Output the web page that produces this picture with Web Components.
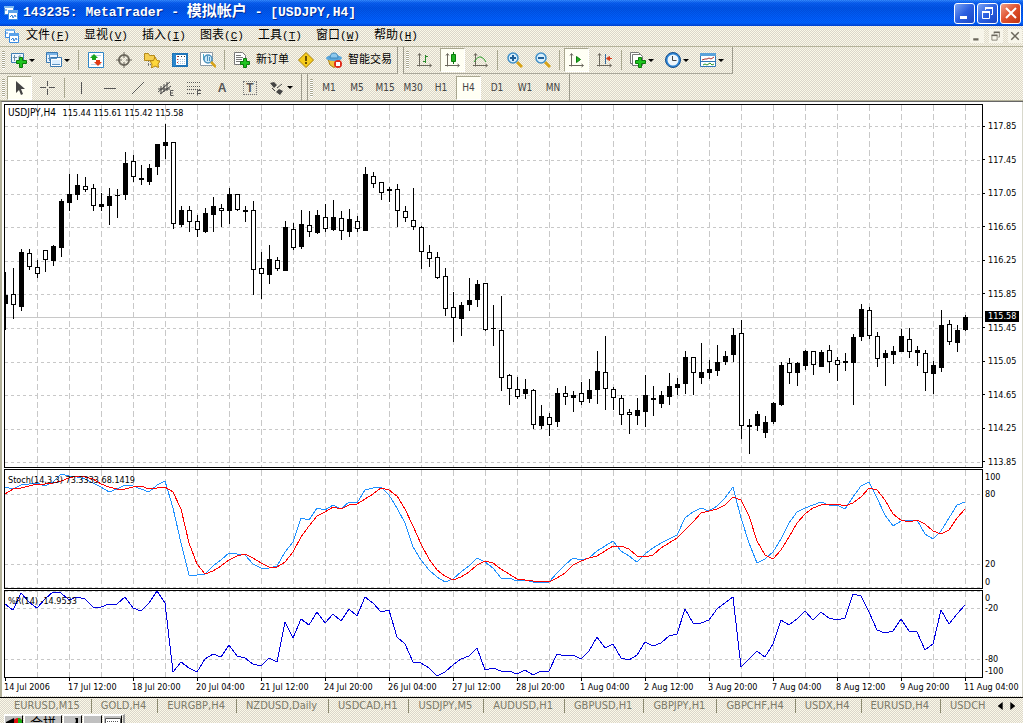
<!DOCTYPE html>
<html lang="zh-CN">
<head>
<meta charset="utf-8">
<title>143235: MetaTrader - 模拟帐户 - [USDJPY,H4]</title>
<style>
  :root {
    --face: repeating-conic-gradient(#dbd6cb 0 25%, #fbf9e8 0 50%) 0 0 / 2px 2px;
    --ui: "DejaVu Sans Condensed", "Liberation Sans", "Noto Sans CJK SC", sans-serif;
    --song: "Liberation Mono", "Noto Sans CJK SC", monospace;
  }
  body { margin: 0; min-height: 100vh; overflow: hidden; }
</style>
</head>
<body>
<mt-window></mt-window>

<script>
const ICONS = {
  app: `<path fill="#fff" stroke="#3a8be0" d="M1.5 1.5h9v8h-9z"/><path fill="#7db8f0" d="M1 1h10v2H1z"/><path fill="#fff" stroke="#3a8be0" d="M5.500 5.500h9v9h-9z"/><path fill="#5aa2ea" d="M5 5h10v3H5z"/><path fill="none" stroke="#2f7fd8" d="M3 6v-2M7 12l2-2 1 3 2-3 1 2"/>`,
  newchart: `<path fill="#eef6ff" stroke="#3f7fb5" d="M.5 1.5h12v9H.5z"/><path fill="none" stroke="#6c8fa8" d="M3.500 3v6M2 5.500h4M8 8V4h2"/><path fill="#1fc41f" stroke="#0a7a0a" d="M8.500 5.500h3v3h4v3h-4v4h-3v-4h-3v-3h3z"/>`,
  profiles: `<path fill="#eaf4ff" stroke="#3a78b0" d="M.5.5h11v10H.5z"/><path fill="#79b3e6" d="M1 1h10v2H1z"/><path fill="#fff" stroke="#3a78b0" d="M4.500 5.500h11v9h-11z"/><path fill="#dbeeff" d="M6 8h8v5H6z"/><path stroke="#5b93c4" d="M2 6.500h9M3.500 3v6M6 12.500h8"/>`,
  market: `<path fill="#fff" stroke="#2f86c8" d="M.5.5h15v15H.5z"/><path stroke="#b9d4ea" d="M3 3.500h10M3 12.500h10"/><path fill="#18a51c" d="M6 2l4 4-2 0v2H4V6H2z"/><path fill="#e03a16" d="M10 14l-4-4h2V8h4v2h2z"/>`,
  cross: `<circle cx="8" cy="8" r="5" fill="none" stroke="#6b675c" stroke-width="2"/><path stroke="#6b675c" d="M8 0v6M8 10v6M0 8h6M10 8h6"/>`,
  navigator: `<path fill="#f6cf50" stroke="#b58a1a" d="M.5 8.500v-7h4l1 2h5v5z"/><path fill="none" stroke="#777" stroke-dasharray="1 1" d="M4.500 9v6M4 12.500h3"/><path fill="#ffd83c" stroke="#b58410" d="M11 5l2 3.500 3 .5-2 3 .500 3.500-3.500-1.500L7.500 16l.5-4-2-3 3.500-.5z"/>`,
  terminal: `<path fill="#fff" stroke="#1f74b8" stroke-width="2" d="M1 2h14v12H1z"/><path fill="#2a86cc" d="M1 2h3v12H1z"/><path stroke="#333" stroke-dasharray="1 2" d="M6 4.500h8"/><path stroke="#a7c6e0" stroke-dasharray="1 1" d="M6 7.500h8M6 9.500h8M6 11.500h8"/><path stroke="#c33" stroke-dasharray="1 2" d="M5.500 4v9"/>`,
  tester: `<path fill="#fff" stroke="#8c9aa5" d="M.5.5h12v13H.5z"/><path stroke="#4aa9c9" d="M3.500 2v6M6.500 3v6"/><circle cx="8" cy="7" r="4" fill="#cdeafb" stroke="#4b91bd" stroke-width="1.500"/><path stroke="#4b91bd" d="M7.500 4v5M9.500 5v4"/><path stroke="#d8a318" stroke-width="2.500" d="M11 10l5 5"/>`,
  order: `<path fill="#fff" stroke="#777" d="M.5.500h8l3 3v9H.5z"/><path stroke="#777" d="M2 3.500h5M2 5.500h7M2 7.500h6M2 9.500h5"/><path fill="#1fc41f" stroke="#0a7a0a" d="M9.500 6.500h3v3h3v3h-3v3h-3v-3h-3v-3h3z"/>`,
  warn: `<path fill="#f6cc1c" stroke="#a77d00" d="M8 .5L15.500 8 8 15.500.5 8z"/><path stroke="#6a5000" stroke-width="2" d="M8 4v5M8 10v2"/>`,
  expert: `<path fill="#f1c13a" stroke="#b0851a" d="M2 7h12l-2 6-4 2.500L4 13z"/><ellipse cx="8" cy="6" rx="8" ry="3" fill="#5aa7dd"/><path fill="#8cc8ee" stroke="#3f87b9" d="M4 6q0-5 4-5t4 5z"/><circle cx="12" cy="12" r="4" fill="#e02a1a"/><path fill="#fff" d="M10 10h4v4h-4z"/>`,
  bars: `<path fill="none" stroke="#6b675c" d="M2.500 2v12.500M0 13.500h14M1 3.500l1.500-2 1.500 2M12.500 12l2 1.500-2 1.500"/><path stroke="#2a8a2a" d="M8.500 3v8M6 9.500h2M9 4.500h2"/>`,
  candles: `<path fill="none" stroke="#6b675c" d="M2.500 2v12.500M0 13.500h14M1 3.500l1.500-2 1.500 2M12.500 12l2 1.500-2 1.500"/><path stroke="#0a7a0a" d="M8.500 0v12"/><path fill="#1fb41f" stroke="#0a7a0a" d="M6.500 2.500h4v7h-4z"/>`,
  line: `<path fill="none" stroke="#6b675c" d="M2.500 2v12.500M0 13.500h14M1 3.500l1.500-2 1.500 2M12.500 12l2 1.500-2 1.500"/><path fill="none" stroke="#2a9a2a" d="M1 10q4-6 7-5t5 5"/>`,
  zoomin: `<path stroke="#d8a318" stroke-width="3" d="M10 10l5 5"/><circle cx="6" cy="6" r="5" fill="#d8effc" stroke="#3f8fc8" stroke-width="1.500"/><path stroke="#1f5f98" stroke-width="2" d="M3 6h6M6 3v6"/>`,
  zoomout: `<path stroke="#d8a318" stroke-width="3" d="M10 10l5 5"/><circle cx="6" cy="6" r="5" fill="#d8effc" stroke="#3f8fc8" stroke-width="1.500"/><path stroke="#1f5f98" stroke-width="2" d="M3 6h6"/>`,
  scroll: `<path fill="none" stroke="#6b675c" d="M2.500 2v12.500M0 13.500h14M1 3.500l1.500-2 1.500 2M12.500 12l2 1.500-2 1.500"/><path fill="#1fb41f" stroke="#0a7a0a" d="M7.500 4.500v6l4-3z"/>`,
  shift: `<path fill="none" stroke="#6b675c" d="M2.500 2v12.500M0 13.500h14M1 3.500l1.500-2 1.500 2M12.500 12l2 1.500-2 1.500"/><path stroke="#356d9e" d="M8.500 2v10"/><path fill="#d43a1a" stroke="#d43a1a" d="M9.500 6.500l3-2v4zM12 6.500h3"/>`,
  indicators: `<path fill="#fff" stroke="#777" d="M.5.5h8l2 2v9H.5z"/><path fill="#fff" stroke="#777" d="M2.500 2.500h8l2 2v9h-10z"/><path fill="#1fc41f" stroke="#0a7a0a" d="M8.500 5.500h3v3h4v3h-4v4h-3v-4h-3v-3h3z"/>`,
  clock: `<circle cx="8" cy="8" r="6.500" fill="#eef6fc" stroke="#2f86d6" stroke-width="2"/><circle cx="8" cy="8" r="7.500" fill="none" stroke="#174f8c"/><path fill="none" stroke="#444" d="M7.500 4v4.500h4"/>`,
  template: `<path fill="#fff" stroke="#2f78b8" d="M.5 1.500h15v13H.5z"/><path fill="#5aa2da" d="M0 1h16v3H0z"/><path stroke="#2f78b8" d="M1 9.500h14"/><path fill="none" stroke="#a33" d="M2 8l3-1 2 0 2-1 2 1 3-2"/><path fill="none" stroke="#2a9a2a" d="M3 13l2-1 2 1 3-2 2 2 2-1"/>`,
  cursor: `<path fill="#444" d="M4 1v12l3-3 2 5 2-1-2-5h4z"/>`,
  plus: `<path stroke="#555" d="M7.500 1v5M7.500 9v6M0 7.500h6M9 7.500h6"/>`,
  vline: `<path stroke="#555" d="M7.500 2v12"/>`,
  hline: `<path stroke="#555" d="M2 8.500h12"/>`,
  trend: `<path stroke="#555" d="M2 14L14 2"/>`,
  channel: `<path stroke="#444" d="M0 12L12 2M2 14L13 6M3 6v8M6 4v8M9 2v9M0 9h12"/><path fill="none" stroke="#555" d="M15.500 10.500h-3v5h3M12.500 13h2.500"/>`,
  fibo: `<path stroke="#555" stroke-dasharray="1 1" d="M1 2.500h13M1 6.500h13M1 9.500h13M1 13.500h8"/><path fill="none" stroke="#555" d="M15 10.500h-3.500v5M12 13.500h3"/>`,
  arrows: `<path fill="#444" d="M1 3l4-1 3 3-3 3zM7 12l3-3 4 2-3 4z"/><path stroke="#444" d="M8 8l5-4M3 8l3 3"/>`,
  minimize: `<path fill="currentColor" d="M3 11h7v3H3z"/>`,
  restore: `<path fill="none" stroke="currentColor" stroke-width="1" d="M2.500 7.500h7v6h-7zM5.500 5V3.500h7v6H11"/><path fill="currentColor" d="M2 6h8v2H2zM5 2h8v2H5z"/>`,
  close: `<path fill="none" stroke="currentColor" stroke-width="2" d="M3 3l10 10M13 3L3 13"/>`
};
const icon = (n, s = 16) => `<svg width="${s}" height="${s}" viewBox="0 0 16 16" aria-hidden="true">${ICONS[n]}</svg>`;
const RESET = `*{box-sizing:border-box}button{font:inherit;color:inherit;background:none;border:0;margin:0;padding:0}svg{display:block;flex:none}`;

class MtElement extends HTMLElement {
  connectedCallback() {
    if (this.shadowRoot) return;
    this.attachShadow({ mode: "open" }).innerHTML = `<style>${RESET}${this.css()}</style>${this.html()}`;
  }
}

customElements.define("mt-titlebar", class extends MtElement {
  css() { return `
    :host{display:flex;align-items:center;height:26px;padding:0 2px 0 3px;gap:4px;color:#fff;
      background:repeating-conic-gradient(#0033cc55 0 25%,#0066ff22 0 50%) 0 0/2px 2px,linear-gradient(#3d95ff 0,#0a62ee 3px,#0055e0 8px,#0060f8 18px,#0066ff 23px,#0040c8 26px)}
    h1{flex:1;margin:0;font:bold 13px/20px var(--song);white-space:nowrap;text-shadow:1px 1px #002a90}
    span{font-size:15px;line-height:20px}
    div{display:flex;gap:2px}
    button{width:21px;height:21px;border:1px solid #fff;border-radius:3px;display:grid;place-items:center;background:linear-gradient(135deg,#7ba4f4,#2b5fe0 50%,#1c46c4)}
    button.x{background:linear-gradient(135deg,#f0a088,#e0502c 50%,#c03410)}`; }
  html() { return `${icon("app")}<h1>143235: MetaTrader - <span>模拟帐户</span> - [USDJPY,H4]</h1>
    <div><button aria-label="最小化">${icon("minimize")}</button><button aria-label="还原">${icon("restore")}</button><button class="x" aria-label="关闭">${icon("close")}</button></div>`; }
});

customElements.define("mt-menubar", class extends MtElement {
  css() { return `
    :host{display:flex;align-items:center;height:21px;padding:0 1px 0 4px;border-bottom:1px solid #b4b29a;font:11px/18px var(--song)}
    nav{flex:1;display:flex;margin-left:6px}
    nav button{width:58px;text-align:left;white-space:nowrap}
    span{font-size:12px}
    .w{display:flex;gap:5px;color:#6b675c}
    .w button{width:14px;height:14px;display:grid;place-items:center;background:#f7f5ea}`; }
  html() { return `${icon("app")}<nav>${[["文件","F"],["显视","V"],["插入","I"],["图表","C"],["工具","T"],["窗口","W"],["帮助","H"]]
    .map(([t, k]) => `<button><span>${t}</span>(<u>${k}</u>)</button>`).join("")}</nav>
    <div class="w"><button aria-label="最小化图表">${icon("minimize", 12)}</button><button aria-label="还原图表">${icon("restore", 12)}</button><button aria-label="关闭图表">${icon("close", 12)}</button></div>`; }
});

customElements.define("mt-toolbar", class extends MtElement {
  css() { return `
    :host{display:flex;align-items:center;height:27px;padding-right:2px;border-right:1px solid #9c9a8c;border-bottom:1px solid #a9a79a}
    :host::before{content:"";width:3px;height:18px;margin:0 1px 0 2px;background:repeating-linear-gradient(#a9a790 0 1px,#fff 1px 2px)}
    :host([second]){border-left:1px solid #9c9a8c;margin-left:5px}
    :host([second])::before{margin:0 2px}
    :host([flat]){border-bottom:0}`; }
  html() { return `<slot></slot>`; }
});

customElements.define("mt-tool", class extends MtElement {
  css() { return `
    :host{display:block}
    button{display:flex;align-items:center;justify-content:center;width:28px;height:24px;font:10px/14px var(--ui);color:#444}
    :host([drop]) button{width:35px;justify-content:flex-start;padding-left:5px;gap:2px}
    :host([drop]) button::after{content:"";border:3px solid transparent;border-top-color:#000;border-bottom:0}
    :host([label]) button{width:auto;padding:0 3px 0 6px;gap:6px;font:11px/14px var(--song);color:#000;white-space:nowrap}
    button[aria-pressed=true]{width:25px;margin:0 2px 0 1px;background:#fffff4;border:1px solid #a9a790;border-right-color:#fff;border-bottom-color:#fff}
    b{font:bold 12px/14px "Liberation Sans",sans-serif;color:#555}
    b.box{outline:1px dotted #777;padding:0 2px;line-height:12px}`; }
  html() {
    const a = n => this.getAttribute(n);
    const g = a("icon"), l = a("label"), t = a("text"), h = a("glyph");
    return `<button ${this.hasAttribute("on") ? 'aria-pressed="true"' : ""} ${l || t || h ? "" : `aria-label="${g}"`}>${g ? icon(g) : ""}${h ? `<b class="${a("frame") ?? ""}">${h}</b>` : ""}${l || t || ""}</button>`;
  }
});

customElements.define("mt-sep", class extends MtElement {
  css() { return `:host{display:block;width:1px;height:20px;margin:0 3px 0 2px;background:#a9a790}`; }
  html() { return ""; }
});

/* One row per bar: wick top, wick bottom, body top, body bottom, 1 = rising (solid) / 0 = falling (hollow) */
const BARS = [
[272,330,295,304,1],[268,319,294,305,0],[249,311,252,307,1],[249,270,253,267,0],[260,278,267,274,0],[250,272,250,260,0],[245,266,246,261,1],[199,257,201,248,1],[174,211,194,203,1],[174,200,185,195,1],
[177,192,186,190,0],[184,211,188,206,0],[193,211,204,207,1],[188,225,196,206,1],[189,218,195,196,1],[152,200,163,195,1],[155,182,161,177,0],[165,185,178,180,1],[164,185,168,182,1],[144,175,144,167,1],
[124,159,142,146,1],[142,229,142,224,0],[206,227,210,225,1],[206,232,210,222,0],[215,237,221,230,0],[208,233,213,232,1],[197,232,206,215,1],[204,227,208,211,0],[188,224,194,211,1],[194,211,194,210,0],
[206,222,210,212,1],[201,295,210,270,0],[252,299,268,274,0],[245,284,259,275,1],[257,271,260,269,0],[221,271,227,271,1],[223,250,229,248,0],[210,249,224,247,1],[211,237,225,232,0],[210,234,215,233,1],
[204,232,217,229,0],[200,231,217,230,1],[211,240,218,231,0],[209,237,219,232,1],[216,232,221,229,0],[167,231,174,231,1],[172,188,176,184,0],[182,200,182,193,0],[187,202,189,191,1],[184,227,189,211,0],
[206,222,211,218,0],[188,230,220,227,0],[226,269,227,252,0],[245,267,252,259,0],[252,279,257,278,0],[268,316,276,309,0],[292,342,307,318,0],[302,336,305,319,1],[278,311,300,305,1],[280,307,284,300,1],
[283,331,283,330,0],[305,346,328,329,1],[296,391,330,378,0],[374,405,375,389,0],[377,399,389,397,0],[379,399,389,394,1],[389,429,390,425,0],[405,429,416,426,1],[413,436,417,425,0],[388,427,393,422,1],
[386,405,393,397,0],[391,412,395,398,1],[382,405,393,402,0],[379,403,390,399,1],[351,404,371,390,1],[336,410,372,389,0],[387,410,389,398,0],[395,425,398,415,0],[409,434,412,415,0],[398,425,410,416,1],
[375,427,395,412,1],[386,416,398,400,1],[391,408,395,404,1],[373,405,386,397,1],[378,395,384,388,1],[351,394,357,384,1],[357,395,357,373,0],[343,384,372,378,1],[360,379,369,373,1],[345,376,362,371,1],
[351,365,356,362,1],[328,362,335,355,1],[320,439,333,426,0],[419,454,425,427,1],[411,431,414,426,1],[416,438,422,433,1],[402,424,403,422,1],[362,406,365,405,1],[358,384,363,373,0],[362,386,363,373,1],
[350,370,351,366,1],[351,375,351,365,0],[350,367,352,367,1],[345,373,350,362,0],[357,381,360,365,0],[353,371,361,363,1],[334,405,337,363,1],[304,341,309,337,1],[307,339,310,336,0],[332,367,336,359,0],
[350,386,353,358,1],[346,364,351,355,1],[329,352,336,352,1],[328,358,339,352,0],[346,366,350,353,1],[350,391,353,373,0],[361,394,365,374,1],[310,372,325,368,1],[320,345,324,342,0],[325,352,330,343,1],[315,331,317,330,1]];

/* Oscillator samples, three units to a pixel */
const STOCH_K = [67,72,61,58,55,63,52,28,32,37,43,53,67,80,73,61,64,72,82,60,49,130,235,331,329,326,304,285,265,268,269,297,310,310,303,262,230,160,165,130,136,121,132,112,115,76,70,67,90,130,175,247,285,315,337,352,343,322,302,279,291,308,340,340,349,346,352,350,351,325,300,280,286,279,257,242,229,259,273,292,268,250,235,222,209,160,142,128,139,123,98,65,158,234,295,282,262,222,175,142,130,121,112,121,121,131,97,64,52,100,150,184,169,166,166,208,223,197,160,119,111];
const STOCH_D = [86,73,68,64,58,58,54,48,38,34,37,43,56,66,72,71,67,64,73,70,65,82,133,235,297,328,319,304,286,273,268,280,293,307,307,290,262,217,184,152,141,127,131,121,117,101,87,70,74,94,133,184,237,283,314,334,344,337,322,300,289,293,313,328,342,346,349,349,352,339,325,300,288,279,272,259,244,244,253,273,277,270,250,235,219,196,170,143,139,133,120,97,106,154,228,271,281,256,217,175,146,130,121,118,118,124,115,96,70,74,106,146,166,172,166,178,199,208,194,158,131];
const WPR = [418,436,385,412,429,402,382,385,405,397,401,427,427,418,418,397,429,437,415,379,415,622,592,609,620,583,568,577,541,573,578,598,602,580,590,472,520,463,481,442,475,448,468,431,454,395,415,442,436,517,538,592,593,609,634,621,601,583,573,550,616,610,619,619,628,616,631,619,619,568,574,571,581,559,517,550,538,580,584,571,532,544,535,512,508,432,475,475,465,431,414,397,607,583,559,577,538,466,481,463,438,466,442,459,466,459,387,392,440,496,505,499,463,499,500,556,538,436,478,448,420];

const STEP = 8;
const poly = (v, zero, color) => `<polyline fill="none" stroke="${color}" points="${v.map((y, i) => `${i * STEP},${Math.round((y - zero) / 3)}`).join(" ")}"/>`;
const bars = top => BARS.map(([a, b, c, d, up], i) => {
  const x = i * STEP;
  return `<rect x="${x}" y="${a - top}" width="1" height="${b - a}"/><rect x="${x - 2}" y="${c - top}" width="5" height="${d - c}"/>` +
    (up ? "" : `<rect x="${x - 1}" y="${c - top + 1}" width="3" height="${d - c - 2}" fill="#fff"/>`);
}).join("");

const PANES = {
  price: { rows: [21,55,89,122,156,189,223,257,290,324,357], rule: 212, title: "<b>USDJPY,H4</b> 115.44 115.61 115.42 115.58", draw: () => bars(105) },
  stoch: { rows: [24,94,117], title: "Stoch(14,3,3) 73.3333 68.1419", draw: () => poly(STOCH_K, 15, "#1e90ff") + poly(STOCH_D, 15, "#f00") },
  wpr: { rows: [0,17,68], title: "%R(14) -14.9533", draw: () => poly(WPR, 378, "#0000e0") }
};

customElements.define("mt-pane", class extends MtElement {
  css() { return `
    :host{display:block;position:relative;border:1px solid #000;background:#fff;overflow:hidden}
    svg{width:100%;height:100%;shape-rendering:crispEdges;position:absolute;inset:0}
    p{position:relative;margin:0;padding:4px 0 0 3px;font:9px/12px var(--ui);color:#000;white-space:nowrap}
    :host([kind=price]) p{padding-top:2px}
    b{font-weight:normal;font-size:10px;margin-right:4px}`; }
  html() {
    const p = PANES[this.getAttribute("kind")];
    return `<svg role="img" aria-label="${this.getAttribute("kind")}">
      <defs><pattern id="v" width="32" height="9" patternUnits="userSpaceOnUse"><rect width="1" height="6" fill="#c8c8c8"/></pattern></defs>
      <rect x="8" width="100%" height="100%" fill="url(#v)"/>
      ${p.rows.map(y => `<line x1="0" x2="100%" y1="${y}" y2="${y}" stroke="#c8c8c8" stroke-dasharray="3 3"/>`).join("")}
      ${p.rule ? `<rect y="${p.rule}" width="100%" height="1" fill="#c8c8c8"/>` : ""}${p.draw()}</svg><p>${p.title}</p>`;
  }
});

customElements.define("mt-scale", class extends MtElement {
  css() { return `
    :host{display:grid;position:relative;align-items:end;font:9px/12px var(--ui);color:#000}
    :host([kind=price]){display:flex;flex-direction:column;align-items:stretch;justify-content:space-between;padding:16px 0 0}
    :host([kind=stoch]){grid-template-rows:14px 17px 70px 18px}
    :host([kind=wpr]){grid-template-rows:14px 10px 51px 12px}
    span{display:flex;align-items:center;gap:3px;height:12px;padding-left:2px}
    :host([kind=price]) span{padding:0}
    :host([kind=price]) span::before{content:"";width:2px;height:1px;background:#000}
    output{position:absolute;left:2px;top:207px;padding:0 3px;background:#000;color:#fff;line-height:11px}`; }
  html() {
    const labels = this.getAttribute("values").split(" ").map(v => `<span>${v}</span>`).join("");
    const now = this.getAttribute("now");
    return labels + (now ? `<output>${now}</output>` : "");
  }
});

customElements.define("mt-chart", class extends MtElement {
  css() { return `
    :host{display:block;background:#fff;border-top:1px solid #666;border-left:2px solid #b4b29a;padding:2px 0 0 2px;box-shadow:inset -1px 0 #d8d8cc}
    .g{display:grid;grid-template-columns:minmax(0,1fr) 40px;grid-template-rows:364px 120px 88px;row-gap:1px}
    .d{display:flex;height:19px;overflow:hidden;border-bottom:1px dotted #ccc8b8;font:9px/12px var(--ui);color:#000}
    .d span{flex:none;width:64px;white-space:nowrap}
    .d span::before{content:"";display:block;width:1px;height:3px;margin-left:1px;background:#000}`; }
  html() { return `<div class="g">
    <mt-pane kind="price"></mt-pane><mt-scale kind="price" now="115.58" values="117.85 117.45 117.05 116.65 116.25 115.85 115.45 115.05 114.65 114.25 113.85"></mt-scale>
    <mt-pane kind="stoch"></mt-pane><mt-scale kind="stoch" values="100 80 20 0"></mt-scale>
    <mt-pane kind="wpr"></mt-pane><mt-scale kind="wpr" values="0 -20 -80 -100"></mt-scale></div>
    <div class="d">${["14 Jul 2006","17 Jul 12:00","18 Jul 20:00","20 Jul 04:00","21 Jul 12:00","24 Jul 20:00","26 Jul 04:00","27 Jul 12:00","28 Jul 20:00","1 Aug 04:00","2 Aug 12:00","3 Aug 20:00","7 Aug 04:00","8 Aug 12:00","9 Aug 20:00","11 Aug 04:00"].map(t => `<span>${t}</span>`).join("")}</div>`; }
});

customElements.define("mt-tabs", class extends MtElement {
  css() { return `
    :host{display:flex;align-items:center;height:17px;border-top:1px solid #000;padding-left:5px;font:11px/14px var(--ui);color:#7c7a68}
    nav{flex:1;display:flex;overflow:hidden}
    nav button{flex:none;padding:0 11px 0 10px;border-right:1px solid #8c8a70;margin-left:-1px;height:14px;line-height:14px;white-space:nowrap}
    nav button:last-child{padding-right:0;border:0}
    .s{flex:none;width:33px;display:flex;justify-content:space-evenly}
    .s button{width:5px;height:8px;background:#000;clip-path:polygon(100% 0,100% 100%,0 50%)}
    .s button:last-child{clip-path:polygon(0 0,100% 50%,0 100%)}`; }
  html() { return `<nav>${["EURUSD,M15","GOLD,H4","EURGBP,H4","NZDUSD,Daily","USDCAD,H1","USDJPY,M5","AUDUSD,H1","GBPUSD,H1","GBPJPY,H1","GBPCHF,H4","USDX,H4","EURUSD,H4","USDCH"].map(t => `<button>${t}</button>`).join("")}</nav>
    <div class="s"><button aria-label="向左"></button><button aria-label="向右"></button></div>`; }
});

customElements.define("mt-ime", class extends MtElement {
  css() { return `
    :host{display:flex;height:9px;overflow:hidden;padding-left:4px}
    div{display:flex;gap:1px;border-top:1px solid #fff;border-right:2px solid #999;height:22px;padding-right:1px}
    button{height:20px;width:19px;background:#c0c0c0;border:1px solid #fff;border-right-color:#000;font:13px/16px var(--song);color:#000;display:flex;justify-content:center}
    .t{width:38px}`; }
  html() { return `<div><button aria-label="输入法"><svg width="16" height="16"><path d="M0 6l8-4 2 6H0z"/><circle cx="12" cy="6" r="4" fill="#e01010"/><path fill="#10b010" d="M12 2a4 4 0 0 1 0 8z"/></svg></button><button class="t">合拼</button><button aria-label="全角半角"><svg width="14" height="14"><path d="M9 2q3 5-4 8h7V2z"/></svg></button><button aria-label="标点"></button><button aria-label="软键盘"><svg width="16" height="14"><path fill="#fff" stroke="#555" d="M.5 2.500h15v9H.5z"/><path stroke="#555" stroke-dasharray="1 1" d="M2 5.500h12M2 7.500h12"/></svg></button></div>`; }
});

customElements.define("mt-window", class extends MtElement {
  css() { return `
    :host{display:flex;flex-direction:column;min-height:100vh;background:var(--face)}
    .r{display:flex;height:27px}
    .r + .r{border-bottom:1px solid #b4b29a}`; }
  html() {
    const tool = s => s.split(" ").map(n => n === "|" ? "<mt-sep></mt-sep>" : `<mt-tool icon="${n.replace(/[*+]/, "")}" ${n.includes("*") ? "on" : ""} ${n.includes("+") ? "drop" : ""}></mt-tool>`).join("");
    return `<mt-titlebar></mt-titlebar><mt-menubar></mt-menubar>
    <div class="r"><mt-toolbar>${tool("newchart+ profiles+ | market cross navigator terminal tester |")}<mt-tool icon="order" label="新订单"></mt-tool>${tool("warn")}<mt-tool icon="expert" label="智能交易"></mt-tool></mt-toolbar>
    <mt-toolbar second>${tool("bars candles* line | zoomin zoomout | scroll* shift | indicators+ clock+ template+")}</mt-toolbar></div>
    <div class="r"><mt-toolbar flat>${tool("cursor* plus | vline hline trend channel fibo")}<mt-tool glyph="A"></mt-tool><mt-tool glyph="T" frame="box"></mt-tool>${tool("arrows+")}</mt-toolbar>
    <mt-toolbar second flat>${["M1","M5","M15","M30","H1","H4","D1","W1","MN"].map(t => `<mt-tool text="${t}" ${t === "H4" ? "on" : ""}></mt-tool>`).join("")}</mt-toolbar></div>
    <mt-chart></mt-chart><mt-tabs></mt-tabs><mt-ime></mt-ime>`;
  }
});
</script>
</body>
</html>
